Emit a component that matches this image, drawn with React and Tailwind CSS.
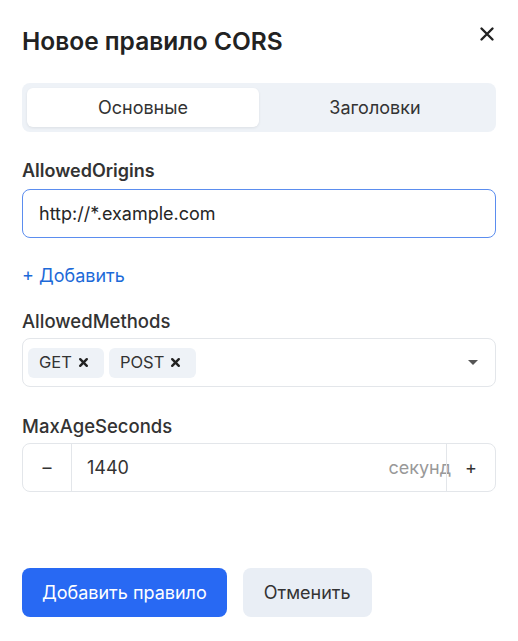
import { useState } from "react";

function Chip({ label }) {
  return (
    <span className="flex items-center h-[30px] pl-[11px] pr-[15px] gap-[6px] rounded-md bg-[#eef2f7] text-[16.5px] text-[#333]">
      {label}
      <svg width="11" height="11" viewBox="0 0 10 10" className="text-[#222]">
        <path d="M2 2 L8 8 M8 2 L2 8" stroke="currentColor" strokeWidth="2.2" strokeLinecap="round" />
      </svg>
    </span>
  );
}

export default function App() {
  const [tab, setTab] = useState("main");

  return (
    <div className="w-[518px] h-[641px] bg-white px-[22px] text-[#262626]" style={{ fontFamily: "Inter, 'Noto Sans', sans-serif" }}>
      {/* Header */}
      <div className="flex items-start justify-between pt-[26px]">
        <h2 className="text-[24.5px] leading-[30px] font-semibold text-[#222]">Новое правило CORS</h2>
        <button className="mt-[0px] mr-[1px] text-[#222]">
          <svg width="16" height="16" viewBox="0 0 16 16">
            <path d="M2.5 2.5 L13.5 13.5 M13.5 2.5 L2.5 13.5" stroke="currentColor" strokeWidth="2.4" strokeLinecap="round" />
          </svg>
        </button>
      </div>

      {/* Tabs */}
      <div className="mt-[27px] h-[49px] p-[5px] rounded-lg bg-[#eef2f7] flex">
        <button
          onClick={() => setTab("main")}
          className={`flex-1 rounded-md text-[18px] text-[#333] ${tab === "main" ? "bg-white shadow-[0_1px_3px_rgba(0,0,0,0.08)]" : ""}`}
        >
          Основные
        </button>
        <button
          onClick={() => setTab("headers")}
          className={`flex-1 rounded-md text-[18px] text-[#333] ${tab === "headers" ? "bg-white shadow-[0_1px_3px_rgba(0,0,0,0.08)]" : ""}`}
        >
          Заголовки
        </button>
      </div>

      {/* AllowedOrigins */}
      <div className="mt-[27px] text-[18px] leading-[24px] font-semibold text-[#333]">AllowedOrigins</div>
      <div className="mt-[6px] h-[49px] rounded-lg border border-[#5b8def] flex items-center px-[16px] text-[18px] text-[#262626]">
        http://*.example.com
      </div>
      <button className="mt-[26px] block text-[18px] leading-[24px] text-[#1d6ad8]">+ Добавить</button>

      {/* AllowedMethods */}
      <div className="mt-[21px] text-[18.5px] leading-[24px] font-medium text-[#333]">AllowedMethods</div>
      <div className="mt-[5px] h-[49px] rounded-lg border border-[#e3e6ea] flex items-center pl-[5px] pr-[16px]">
        <div className="flex gap-[5px] flex-1">
          <Chip label="GET" />
          <Chip label="POST" />
        </div>
        <svg width="12" height="7" viewBox="0 0 12 7" className="text-[#555]">
          <path d="M1 1 H11 L6 6 Z" fill="currentColor" />
        </svg>
      </div>

      {/* MaxAgeSeconds */}
      <div className="mt-[27px] text-[18.5px] leading-[24px] font-medium text-[#333]">MaxAgeSeconds</div>
      <div className="mt-[5px] h-[49px] rounded-lg border border-[#e3e6ea] flex items-stretch">
        <button className="w-[49px] border-r border-[#e3e6ea] flex items-center justify-center text-[18px] text-[#333]">–</button>
        <div className="flex-1 flex items-center pl-[15px] text-[18px] text-[#333]">1440</div>
        <div className="flex items-center text-[18px] text-[#999] -mr-[5px]">секунд</div>
        <button className="w-[49px] border-l border-[#e3e6ea] flex items-center justify-center text-[18px] text-[#333]">+</button>
      </div>

      {/* Actions */}
      <div className="mt-[76px] flex gap-[16px]">
        <button className="h-[49px] px-[20px] rounded-lg bg-[#2869f3] text-white text-[18px]">Добавить правило</button>
        <button className="h-[49px] px-[21px] rounded-lg bg-[#e9eef5] text-[#333] text-[18px]">Отменить</button>
      </div>
    </div>
  );
}
